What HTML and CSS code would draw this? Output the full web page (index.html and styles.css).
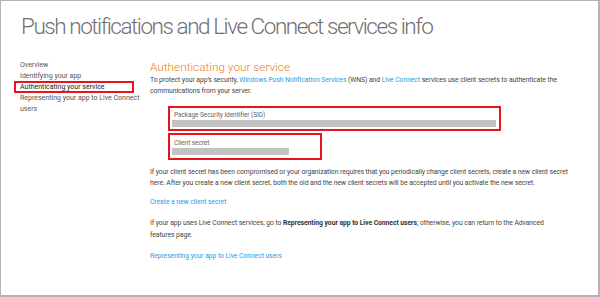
FILE: index.html
```html
<!DOCTYPE html>
<html>
<head>
<meta charset="utf-8">
<link rel="stylesheet" href="styles.css">
</head>
<body>
<div class="frame">
  <h1 class="title">Push notifications and Live Connect services info</h1>
  <div class="layout">
    <nav class="sidebar">
      <div class="nav-item">Overview</div>
      <div class="nav-item">Identifying your app</div>
      <div class="nav-item nav-current">Authenticating your service</div>
      <div class="nav-item">Representing your app to Live Connect users</div>
    </nav>
    <main class="content">
      <h2 class="heading">Authenticating your service</h2>
      <p class="para intro">To protect your app’s security, <a class="link">Windows Push Notification Services</a> (WNS) and <a class="link">Live Connect</a> services use client secrets to authenticate the<br>communications from your server.</p>
      <div class="field field-sid">
        <div class="field-label">Package Security Identifier (SID)</div>
        <div class="field-bar"></div>
      </div>
      <div class="field field-secret">
        <div class="field-label">Client secret</div>
        <div class="field-bar"></div>
      </div>
      <p class="para p-secret">If your client secret has been compromised or your organization requires that you periodically change client secrets, create a new client secret<br>here. After you create a new client secret, both the old and the new client secrets will be accepted until you activate the new secret.</p>
      <p class="para p-link"><a class="link">Create a new client secret</a></p>
      <p class="para p-live">If your app uses Live Connect services, go to <b>Representing your app to Live Connect users</b>; otherwise, you can return to the Advanced<br>features page.</p>
      <p class="para p-link p-last"><a class="link">Representing your app to Live Connect users</a></p>
    </main>
  </div>
</div>
</body>
</html>
```
FILE: styles.css
```css
* { box-sizing: border-box; }
html, body { margin: 0; padding: 0; background: #fff; }
body { font-family: Roboto, "Open Sans", sans-serif; color: #444; }
.frame {
  width: 600px;
  height: 297px;
  border-top: 1px solid #b4b4b4;
  border-left: 1px solid #b4b4b4;
  border-right: 2px solid #b4b4b4;
  border-bottom: 2px solid #b4b4b4;
  overflow: hidden;
}
.title {
  margin: 0;
  padding: 10px 0 0 20px;
  font-weight: 300;
  font-size: 22.5px;
  line-height: 30px;
  color: #707070;
  letter-spacing: -1.45px;
  white-space: nowrap;
}
.layout {
  display: flex;
  padding-top: 19px;
}
.sidebar {
  width: 149px;
  flex: none;
  padding-left: 19px;
  padding-right: 10px;
  font-size: 7px;
  line-height: 10.5px;
  color: #555;
}
.nav-current {
  margin-left: -6px;
  margin-right: 6px;
  padding-left: 4px;
  border: 2px solid #e5141f;
  line-height: 8px;
  color: #222;
}
.content {
  flex: 1;
  padding-right: 4px;
  font-size: 6.8px;
  letter-spacing: -0.06px;
  line-height: 11.3px;
  white-space: nowrap;
}
.heading {
  margin: 0;
  font-weight: 300;
  font-size: 11.8px;
  line-height: 15px;
  letter-spacing: 0;
  color: #ee7d22;
}
.para { margin: 0; color: #444; }
.link { color: #1ba1e2; }
b { font-weight: 700; color: #333; }
.field {
  margin-left: 18px;
  border: 2px solid #e5141f;
  padding: 2px 3px 2px 2px;
  color: #666;
  font-size: 6.5px;
  line-height: 10px;
}
.field-label { padding-left: 2px; }
.field-bar { height: 7px; background: #c3c3c3; }
.field-sid { margin-top: 8px; width: 333px; }
.field-secret { margin-top: 2px; width: 154px; padding-right: 31px; padding-top: 3px; padding-bottom: 3px; }
.p-secret { margin-top: 7px; }
.p-link { margin-top: 8px; }
.p-live { margin-top: 10px; }
.p-last { margin-top: 10px; }
```
